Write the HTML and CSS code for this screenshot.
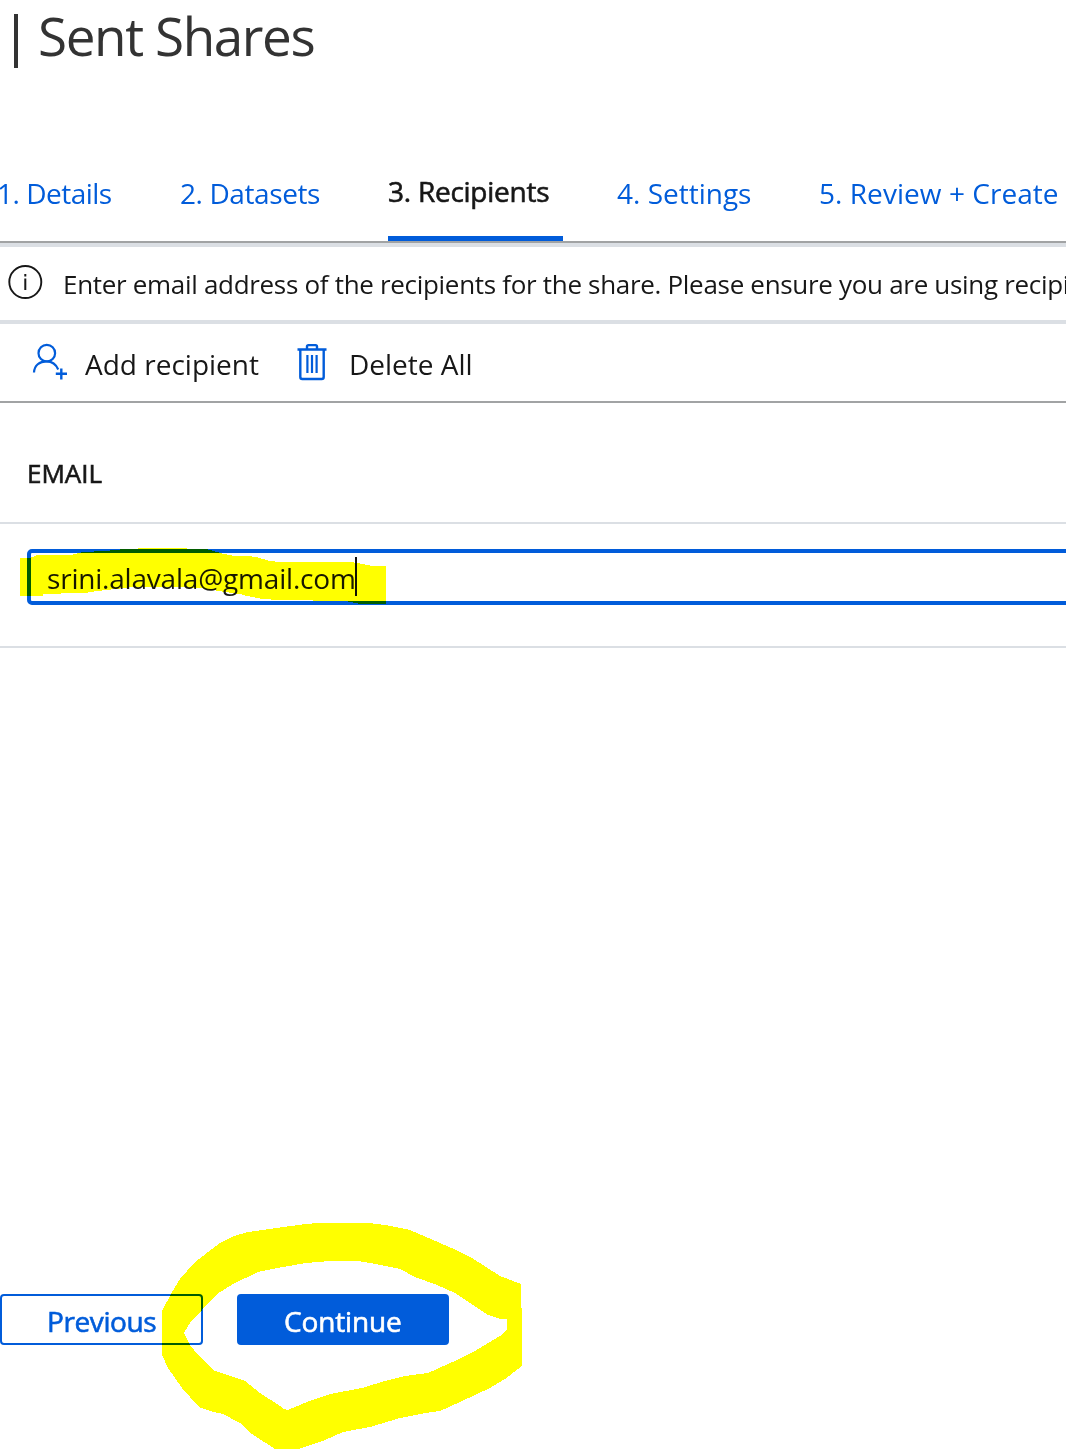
FILE: index.html
```html
<!DOCTYPE html>
<html lang="en">
<head>
<meta charset="utf-8">
<title>Sent Shares</title>
<link rel="stylesheet" href="styles.css">
</head>
<body>
<main class="page">
  <h1 class="title"><span class="divider"></span><span class="title-text">Sent Shares</span></h1>
  <nav class="tabs">
    <a class="tab details">1. Details</a>
    <a class="tab datasets">2. Datasets</a>
    <a class="tab active">3. Recipients</a>
    <a class="tab settings">4. Settings</a>
    <a class="tab review">5. Review + Create</a>
  </nav>
  <section class="info">
    <svg class="info-icon" width="34" height="34" viewBox="0 0 34 34" fill="none" stroke="#171717">
      <circle cx="17.3" cy="17" r="16" stroke-width="1.9"/>
      <path d="M17.3 13.5V25M17.3 9v2.5" stroke-width="2"/>
    </svg>
    <span class="info-text">Enter email address of the recipients for the share. Please ensure you are using recipi</span>
  </section>
  <section class="toolbar">
    <svg class="add-icon" width="36" height="38" viewBox="0 0 36 38" fill="none" stroke="#015cda" stroke-width="2.2">
      <circle cx="14.8" cy="10.2" r="8.3"/>
      <path d="M2 29.5C2.3 22.5 7.5 18.3 14.5 18.3C20 18.3 24 21 26.2 26.5"/>
      <path d="M23.8 30.8H35M29.3 25.5V36.5" stroke-width="2.4"/>
    </svg>
    <span class="add-text">Add recipient</span>
    <svg class="trash-icon" width="30" height="38" viewBox="0 0 30 38" fill="none" stroke="#015cda" stroke-width="2.4">
      <path d="M0.5 6.5H29.5M10 6V3.6Q10 2.1 11.5 2.1H18.5Q20 2.1 20 3.6V6M3.3 7V34Q3.3 36 5.3 36H24.7Q26.7 36 26.7 34V7"/>
      <path d="M10.4 12V30M15 12V30M19.6 12V30" stroke-width="2.2"/>
    </svg>
    <span class="delete-text">Delete All</span>
  </section>
  <section class="table">
    <div class="head">EMAIL</div>
    <div class="row"><div class="field"><span class="email">srini.alavala@gmail.com</span><span class="caret"></span></div></div>
  </section>
  <footer class="actions">
    <button class="button previous"><span>Previous</span></button>
    <button class="button continue"><span>Continue</span></button>
  </footer>
  <svg class="marker" width="1066" height="1449" viewBox="0 0 1066 1449" fill="#ff0" fill-rule="evenodd" shape-rendering="crispEdges">
    <path d="M20 558H30L36 555.5L73 554.5L83 552L105 551L120 549.5L147 548H176L208 549.5L222 553.5L235 556L252 556.5L258 557.5L270 561L280 562H350L358 563L370 565.5L386 566V604L358 603.5L345 601L280 600L262 599L247 596L240 594L225 592L200 588L177 587H133L97 591L88 592.5L70 593L43 594.5V595.5H20Z"/>
    <path d="M162 1311L171 1294L180 1279L195 1262L220 1243L234 1236L248 1232L280 1227.5L306 1224L318 1223H369L385 1225L410 1230L440 1243L456 1250L472 1258L500 1276L521 1284V1308H522V1366L505 1379L490 1388L460 1402L440 1411L425 1413L400 1418L370 1427L343 1432L325 1440L298 1449H275L252 1434L240 1423L223 1414L213 1412L199 1407L182 1388L168 1368L162 1355ZM184 1333L190 1345L199 1356L213 1370L233 1377L245 1381L260 1393L280 1406L284 1409L288 1410L295 1407L307 1402L330 1394L362 1388L385 1381L405 1376L428 1373L457 1360L475 1351L500 1336L507 1330V1319H500L488 1315L473 1305L455 1293L437 1285L415 1277L400 1269L370 1263L358 1261H330L306 1263L280 1267.5L258 1272L233 1284L217 1294L202 1310L190 1323Z"/>
  </svg>
</main>
</body>
</html>
```
FILE: styles.css
```css
* { box-sizing: border-box; }
body { margin: 0; background: #fff; color: #171717; font-family: "Open Sans", "Noto Sans", sans-serif; }
.page { position: relative; width: 1066px; height: 1449px; overflow: hidden; display: flex; flex-direction: column; white-space: nowrap; isolation: isolate; background: #fff; }
.title { margin: 0; height: 147px; padding-left: 14px; display: flex; align-items: flex-start; font-size: 53px; font-weight: 400; color: #333; }
.divider { width: 4px; height: 54px; margin-top: 14px; background: #333; }
.title-text { line-height: 72px; margin-left: 20px; letter-spacing: -1.4px; }
.tabs { height: 96px; display: flex; border-bottom: 2px solid #a1a3a4; font-size: 28px; color: #015cda; }
.tab { height: 94px; line-height: 92px; flex: none; }
.details { width: 183px; margin-left: -3px; letter-spacing: -0.5px; }
.datasets { width: 208px; letter-spacing: -0.4px; }
.active { width: 175px; margin-right: 54px; line-height: 88px; letter-spacing: -0.25px; color: #171717; border-bottom: 5px solid #015cda; -webkit-text-stroke: 0.6px #171717; }
.settings { width: 202px; }
.review { letter-spacing: 0.05px; }
.info { height: 81px; border-top: 4px solid #dbdfe4; border-bottom: 4px solid #dbdfe4; padding-left: 8px; display: flex; font-size: 26px; }
.info-icon { margin-top: 18px; flex: none; overflow: visible; }
.info-text { line-height: 74px; margin-left: 21px; letter-spacing: -0.31px; }
.toolbar { height: 79px; border-bottom: 2px solid #a1a3a4; padding-left: 32px; display: flex; font-size: 28px; }
.add-icon, .trash-icon { margin-top: 19px; flex: none; }
.add-text { width: 212px; margin-left: 17px; line-height: 80px; }
.delete-text { margin-left: 22px; line-height: 80px; }
.head { height: 121px; padding-left: 27px; line-height: 140px; border-bottom: 2px solid #dbdfe4; font-size: 26px; -webkit-text-stroke: 0.6px #171717; }
.row { height: 124px; padding: 25px 0 0 27px; border-bottom: 2px solid #dbdfe4; }
.field { width: 1060px; height: 56px; border: 4px solid #015cda; border-radius: 5px; padding-left: 16px; display: flex; font-size: 28px; }
.email { width: 308px; line-height: 50px; letter-spacing: -0.2px; }
.caret { width: 2px; height: 39px; margin-top: 4px; background: #111; }
.actions { margin-top: 646px; height: 51px; display: flex; gap: 34px; }
.button { height: 51px; border: 2px solid #015cda; border-radius: 4px; padding: 0 0 0 45px; font: 28px/50px "Open Sans", "Noto Sans", sans-serif; text-align: left; color: #015cda; background: #fff; -webkit-text-stroke: 0.6px currentColor; }
.button span { display: block; }
.previous { width: 203px; letter-spacing: -0.4px; }
.continue { width: 212px; letter-spacing: -0.15px; background: #015cda; color: #fff; }
.marker { position: absolute; left: 0; top: 0; mix-blend-mode: multiply; pointer-events: none; }
```
